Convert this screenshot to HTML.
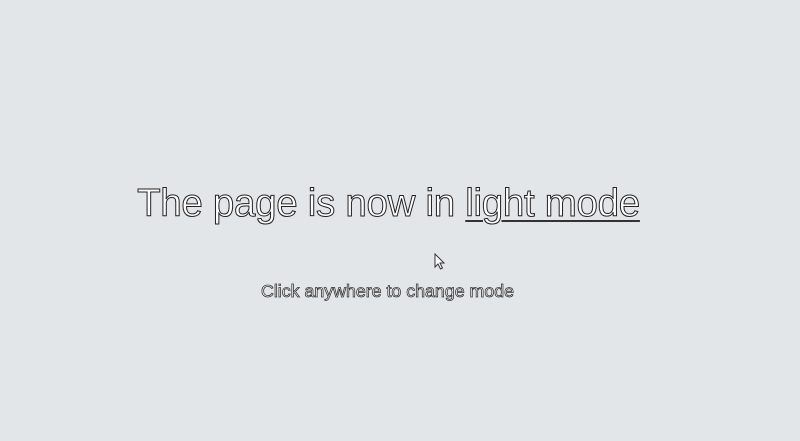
<!DOCTYPE html>
<html><head><meta charset="utf-8"><style>
html,body{margin:0;width:800px;height:441px;background:#e3e6e9;overflow:hidden;font-family:"Liberation Sans",sans-serif}
h1{position:absolute;left:0;width:777px;top:182px;margin:0;text-align:center;font-weight:400;font-size:38.5px;color:#fff;-webkit-text-stroke:1px #222;white-space:nowrap;letter-spacing:-0.3px}
h1 u{text-decoration:underline;text-decoration-thickness:2px;text-underline-offset:4px;text-decoration-color:#333}
p{position:absolute;left:0;width:775px;top:281px;margin:0;text-align:center;font-size:17.8px;color:#fff;-webkit-text-stroke:0.8px #333;white-space:nowrap}
svg{position:absolute;left:434px;top:253px}
</style></head><body>
<h1>The page is now in <u>light mode</u></h1>
<svg width="12" height="18" viewBox="0 0 12 18"><path d="M1 1 L1 14 L4 11 L6.5 16 L8.5 15 L6 10 L10 10 Z" fill="#fff" stroke="#333" stroke-width="1"/></svg>
<p>Click anywhere to change mode</p>
</body></html>
